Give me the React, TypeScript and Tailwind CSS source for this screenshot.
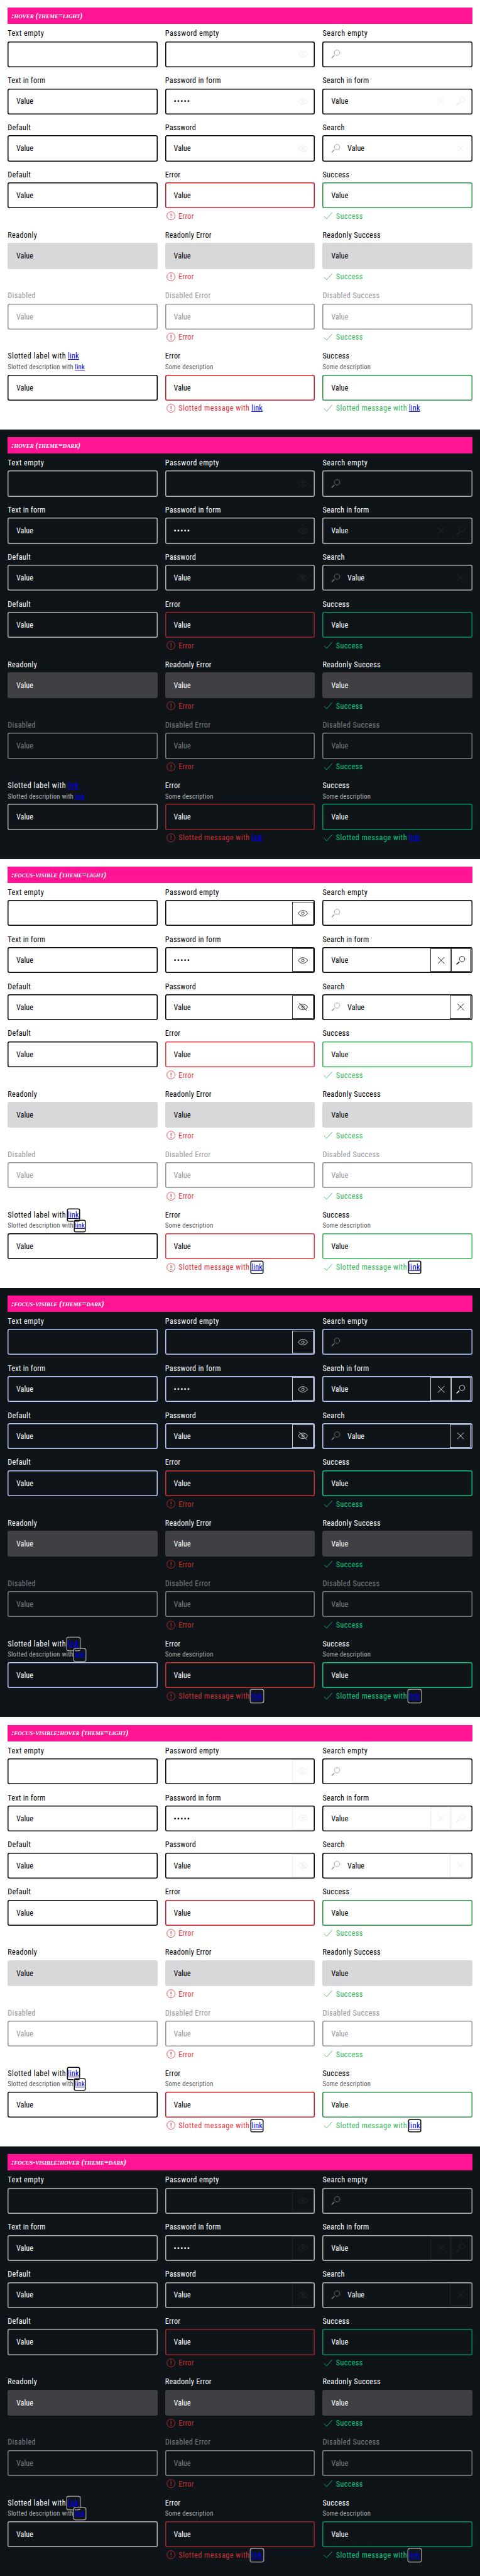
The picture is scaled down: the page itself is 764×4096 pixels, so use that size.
import type { ReactNode } from "react";

type Mode = "hover" | "focus" | "both";
type Tone = "none" | "error" | "success";
type Kind = "plain" | "readonly" | "disabled";

interface Theme {
  page: string;
  text: string;
  muted: string;
  disabledText: string;
  readonlyBox: string;
  disabledBox: string;
  hover: Record<Tone, string>;
  focus: Record<Tone, string>;
  message: Record<Tone, string>;
  searchIcon: string;
  button: string;
  buttonFrame: string;
  ghost: string;
  ghostFrame: string;
}

const light: Theme = {
  page: "bg-white",
  text: "text-[#010205]",
  muted: "text-[#535457]",
  disabledText: "text-[#949598]",
  readonlyBox: "bg-[#d8d8db]",
  disabledBox: "shadow-[inset_0_0_0_1.53px_#949598]",
  hover: {
    none: "shadow-[inset_0_0_0_1.53px_#010205]",
    error: "shadow-[inset_0_0_0_1.53px_#cc1922]",
    success: "shadow-[inset_0_0_0_1.53px_#2a9048]",
  },
  focus: {
    none: "shadow-[inset_0_0_0_1.53px_#000000]",
    error: "shadow-[inset_0_0_0_1.53px_#e9363f]",
    success: "shadow-[inset_0_0_0_1.53px_#33b95a]",
  },
  message: { none: "", error: "text-[#e5343d]", success: "text-[#33b95a]" },
  searchIcon: "text-[#949598]",
  button: "text-[#010205]",
  buttonFrame: "shadow-[inset_0_0_0_0.8px_#000000]",
  ghost: "text-[#e6e6e6]",
  ghostFrame: "shadow-[inset_0_0_0_0.8px_#e8e8e8]",
};

const dark: Theme = {
  page: "bg-[#0e1418]",
  text: "text-[#fbfcff]",
  muted: "text-[#afb0b3]",
  disabledText: "text-[#7c7f81]",
  readonlyBox: "bg-[#404044]",
  disabledBox: "shadow-[inset_0_0_0_1.53px_#7c7f81]",
  hover: {
    none: "shadow-[inset_0_0_0_1.53px_#b0b1b4]",
    error: "shadow-[inset_0_0_0_1.53px_#9c2729]",
    success: "shadow-[inset_0_0_0_1.53px_#078f60]",
  },
  focus: {
    none: "shadow-[inset_0_0_0_1.53px_#b8c8ff]",
    error: "shadow-[inset_0_0_0_1.53px_#cc3333]",
    success: "shadow-[inset_0_0_0_1.53px_#09c782]",
  },
  message: { none: "", error: "text-[#c93132]", success: "text-[#09c782]" },
  searchIcon: "text-[#7c7f81]",
  button: "text-[#fbfcff]",
  buttonFrame: "shadow-[inset_0_0_0_0.8px_#ffffff]",
  ghost: "text-[#262b2f]",
  ghostFrame: "shadow-[inset_0_0_0_0.8px_#262b2f]",
};

const tracking: Record<string, string> = {
  "Text empty": "tracking-[0.52px]",
  "Password empty": "tracking-[0.44px]",
  "Search empty": "tracking-[0.53px]",
  "Text in form": "tracking-[0.23px]",
  "Password in form": "tracking-[0.26px]",
  "Search in form": "tracking-[0.27px]",
  Default: "tracking-[0.3px]",
  Password: "tracking-[0.21px]",
  Search: "tracking-[0.39px]",
  Error: "tracking-[0.23px]",
  Success: "tracking-[0.36px]",
  Readonly: "tracking-[0.37px]",
  "Readonly Error": "tracking-[0.28px]",
  "Readonly Success": "tracking-[0.33px]",
  Disabled: "tracking-[0.36px]",
  "Disabled Error": "tracking-[0.32px]",
  "Disabled Success": "tracking-[0.38px]",
  "Slotted label with": "tracking-[0.53px]",
  "Slotted message with": "tracking-[0.47px]",
  "Slotted description with": "tracking-[0.2px]",
  "Some description": "tracking-[0.19px]",
  "•••••": "tracking-[1.2px]",
  Value: "tracking-[0.03px]",
};

const Words = ({ text }: { text: string }) => <span className={tracking[text]}>{text}</span>;

function Icon({ children, className = "" }: { children: ReactNode; className?: string }) {
  return (
    <svg
      viewBox="0 0 24 24"
      fill="none"
      stroke="currentColor"
      strokeWidth="1.1"
      className={`size-6 shrink-0 ${className}`}
    >
      {children}
    </svg>
  );
}

const EyeGlyph = () => (
  <>
    <path d="M2.3 12C4.5 8.2 8 6.3 12 6.3s7.5 1.9 9.7 5.7C19.5 15.8 16 17.700 12 17.700S4.500 15.800 2.300 12Z" />
    <circle cx="12" cy="12" r="2.600" />
  </>
);

const glyphs = {
  search: (
    <>
      <circle cx="15" cy="9" r="5.600" />
      <path d="M9.300 14.700 3.600 20.400" strokeWidth="1.900" />
    </>
  ),
  eye: <EyeGlyph />,
  eyeOff: (
    <>
      <EyeGlyph />
      <path d="M4 4 20.500 20" />
    </>
  ),
  close: <path d="M5.200 5.200 18.800 18.800M18.800 5.200 5.200 18.800" />,
};

const messageGlyphs = {
  error: (
    <>
      <circle cx="12" cy="12" r="8.500" />
      <path d="M12 7.200v6M12 15v2" strokeWidth="1.500" />
    </>
  ),
  success: <path d="M3.500 12.800 9 18.300 20.600 5.200" />,
};

interface Field {
  label: string;
  description?: string;
  linked?: boolean;
  value?: string;
  leading?: boolean;
  buttons?: (keyof typeof glyphs)[];
  tone?: Tone;
  kind?: Kind;
  message?: string;
}

function Link({ mode, small }: { mode: Mode; small?: boolean }) {
  const ring =
    mode === "hover" ? "" : "rounded-[1.5px] shadow-[0_0_0_1.53px_#101010,0_0_0_2.3px_#ffffff]";
  const size = small ? "h-[16.4px] leading-[16.4px]" : "h-6 leading-[18.33px]";
  return (
    <>
      {" "}
      <a className={`relative inline-block tracking-[0.18px] text-[#0000ee] underline ${size} ${ring}`}>link</a>
    </>
  );
}

function TextField({ field, theme, mode }: { field: Field; theme: Theme; mode: Mode }) {
  const { label, description, value, kind = "plain", tone = "none", buttons = [] } = field;
  const box =
    kind === "readonly"
      ? theme.readonlyBox
      : kind === "disabled"
        ? theme.disabledBox
        : mode === "focus"
          ? theme.focus[tone]
          : theme.hover[tone];
  const text = kind === "disabled" ? theme.disabledText : theme.text;
  const button = mode === "focus" ? theme.button : theme.ghost;
  const frame = mode === "focus" ? theme.buttonFrame : mode === "both" ? theme.ghostFrame : "";
  return (
    <div className="flex flex-col">
      <div className={`h-6 leading-[19.3px] ${text}`}>
        <Words text={label} />
        {field.linked && <Link mode={mode} />}
      </div>
      {description && (
        <div className={`h-5.5 text-[10.69px] leading-[16.8px] ${theme.muted}`}>
          <Words text={description} />
          {field.linked && <Link mode={mode} small />}
        </div>
      )}
      <div className={`mt-1 flex h-13.5 items-center rounded-[3.05px] pl-4.5 pr-[2.3px] ${box} ${text}`}>
        {field.leading && <Icon className={`mr-[9.93px] -ml-[2.3px] ${theme.searchIcon}`}>{glyphs.search}</Icon>}
        <span className="grow pt-[1px] leading-[18.33px]">{value && <Words text={value} />}</span>
        {buttons.map((name) => (
          <span key={name} className={`-ml-1 flex h-12 w-11 items-center justify-center ${button} ${frame}`}>
            <Icon>{glyphs[name]}</Icon>
          </span>
        ))}
      </div>
      {tone !== "none" && (
        <div className={`mt-1 flex h-6 items-center gap-1 leading-[18.33px] ${theme.message[tone]}`}>
          <Icon>{messageGlyphs[tone]}</Icon>
          <span className="pt-[1px]">
            {field.message && <Words text={field.message} />}
            {description && <Link mode={mode} />}
          </span>
        </div>
      )}
    </div>
  );
}

const states = (prefix: string, kind: Kind): Field[] => [
  { label: prefix || "Default", value: "Value", kind },
  { label: `${prefix} Error`.trim(), value: "Value", kind, tone: "error", message: "Error" },
  { label: `${prefix} Success`.trim(), value: "Value", kind, tone: "success", message: "Success" },
];

const rows: { height: string; fields: Field[] }[] = [
  {
    height: "h-24.5",
    fields: [
      { label: "Text empty" },
      { label: "Password empty", buttons: ["eye"] },
      { label: "Search empty", leading: true },
    ],
  },
  {
    height: "h-24.5",
    fields: [
      { label: "Text in form", value: "Value" },
      { label: "Password in form", value: "•••••", buttons: ["eye"] },
      { label: "Search in form", value: "Value", buttons: ["close", "search"] },
    ],
  },
  {
    height: "h-24.5",
    fields: [
      { label: "Default", value: "Value" },
      { label: "Password", value: "Value", buttons: ["eyeOff"] },
      { label: "Search", value: "Value", leading: true, buttons: ["close"] },
    ],
  },
  { height: "h-31.5", fields: states("", "plain") },
  { height: "h-31.5", fields: states("Readonly", "readonly") },
  { height: "h-31.5", fields: states("Disabled", "disabled") },
  {
    height: "h-37",
    fields: [
      { label: "Slotted label with", description: "Slotted description with", linked: true, value: "Value" },
      {
        label: "Error",
        description: "Some description",
        value: "Value",
        tone: "error",
        message: "Slotted message with",
      },
      {
        label: "Success",
        description: "Some description",
        value: "Value",
        tone: "success",
        message: "Slotted message with",
      },
    ],
  },
];

function Section({ title, theme, mode, height }: { title: string; theme: Theme; mode: Mode; height: string }) {
  return (
    <section className={`flex flex-col px-4 pt-4 ${height} ${theme.page}`}>
      <h2 className="mb-2 flex h-8.5 shrink-0 items-center bg-[#ff1493] px-2 font-['Liberation_Serif',serif] text-[12.22px] font-bold tracking-[-0.05px] text-white italic [font-variant-caps:small-caps]">
        {title}
      </h2>
      {rows.map((row, i) => (
        <div key={i} className={`grid shrink-0 grid-cols-3 gap-x-4 ${row.height}`}>
          {row.fields.map((field, j) => (
            <TextField key={j} field={field} theme={theme} mode={mode} />
          ))}
        </div>
      ))}
    </section>
  );
}

export default function App() {
  return (
    <main className="h-[4096px] w-[764px] overflow-hidden font-[Roboto,sans-serif] text-[12.22px] whitespace-nowrap [--spacing:3.055px] [&_section>div]:[font-stretch:75%]">
      <Section title=":hover (theme=light)" theme={light} mode="hover" height="h-[682.8px]" />
      <Section title=":hover (theme=dark)" theme={dark} mode="hover" height="h-[682.8px]" />
      <Section title=":focus-visible (theme=light)" theme={light} mode="focus" height="h-[682px]" />
      <Section title=":focus-visible (theme=dark)" theme={dark} mode="focus" height="h-[682.8px]" />
      <Section title=":focus-visible:hover (theme=light)" theme={light} mode="both" height="h-[682.8px]" />
      <Section title=":focus-visible:hover (theme=dark)" theme={dark} mode="both" height="h-[682.8px]" />
    </main>
  );
}
